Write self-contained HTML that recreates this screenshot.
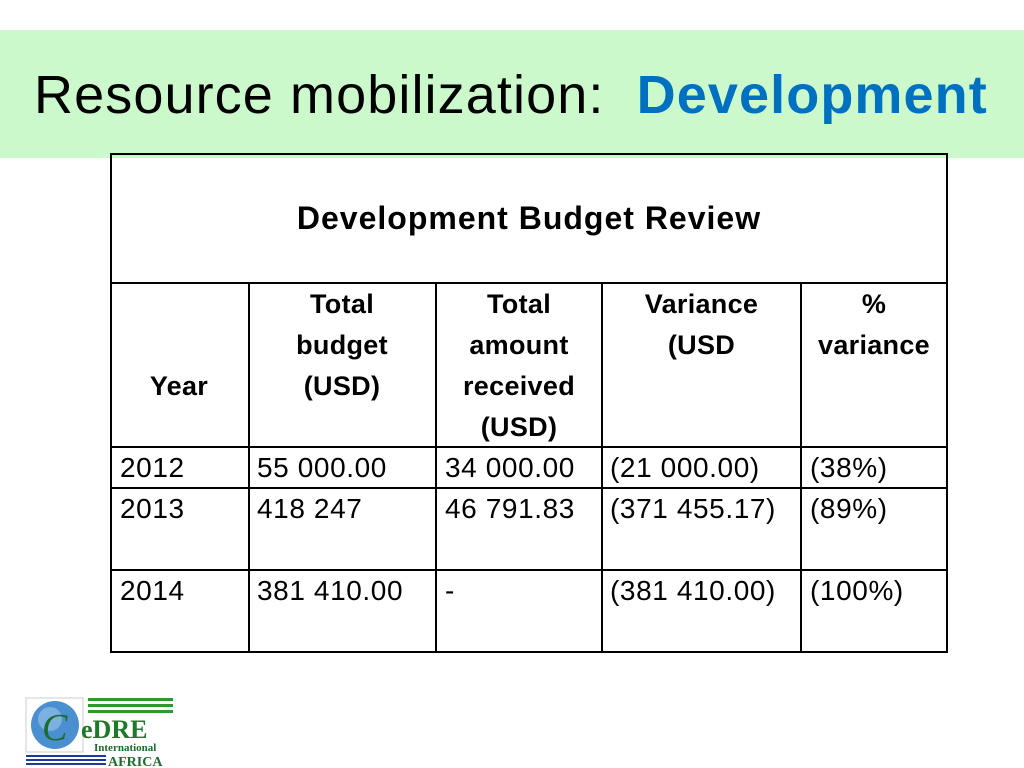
<!DOCTYPE html>
<html><head><style>
body{margin:0;width:1024px;height:768px;background:#fff;position:relative;overflow:hidden;font-family:"Liberation Sans",sans-serif}
.band{position:absolute;left:0;top:30px;width:1024px;height:128px;background:#ccf9cc}
.title{position:absolute;left:34px;top:62px;font-size:54px;line-height:66px;color:#000;white-space:nowrap;letter-spacing:1.1px}
.title b{color:#0070c0}
.l{position:absolute;background:#000}
.t{position:absolute;font-size:28px;color:#000;white-space:nowrap;line-height:41px;letter-spacing:0.6px}
.h{font-weight:bold;text-align:center;font-size:27px;letter-spacing:0.3px}
</style></head><body>
<div class="band"></div>
<div class="title">Resource mobilization:&nbsp; <b>Development</b></div>
<div class="l" style="left:110px;top:153px;width:838px;height:2px"></div>
<div class="l" style="left:110px;top:282px;width:838px;height:2px"></div>
<div class="l" style="left:110px;top:446px;width:838px;height:2px"></div>
<div class="l" style="left:110px;top:487px;width:838px;height:2px"></div>
<div class="l" style="left:110px;top:569px;width:838px;height:2px"></div>
<div class="l" style="left:110px;top:651px;width:838px;height:2px"></div>
<div class="l" style="left:110px;top:153px;width:2px;height:500px"></div>
<div class="l" style="left:946px;top:153px;width:2px;height:500px"></div>
<div class="l" style="left:248px;top:282px;width:2px;height:371px"></div>
<div class="l" style="left:435px;top:282px;width:2px;height:371px"></div>
<div class="l" style="left:601px;top:282px;width:2px;height:371px"></div>
<div class="l" style="left:800px;top:282px;width:2px;height:371px"></div>
<div class="t h" style="left:110px;width:838px;top:198px;font-size:32px;letter-spacing:1px">Development Budget Review</div>
<div class="t h" style="left:110px;width:138px;top:366px">Year</div>
<div class="t h" style="left:248px;width:188px;top:284px">Total<br>budget<br>(USD)</div>
<div class="t h" style="left:436px;width:166px;top:284px">Total<br>amount<br>received<br>(USD)</div>
<div class="t h" style="left:602px;width:199px;top:284px">Variance<br>(USD</div>
<div class="t h" style="left:801px;width:146px;top:284px">%<br>variance</div>
<div class="t" style="left:120px;top:447px">2012</div>
<div class="t" style="left:257px;top:447px">55 000.00</div>
<div class="t" style="left:445px;top:447px">34 000.00</div>
<div class="t" style="left:610px;top:447px">(21 000.00)</div>
<div class="t" style="left:810px;top:447px">(38%)</div>
<div class="t" style="left:120px;top:488px">2013</div>
<div class="t" style="left:257px;top:488px">418 247</div>
<div class="t" style="left:445px;top:488px">46 791.83</div>
<div class="t" style="left:610px;top:488px">(371 455.17)</div>
<div class="t" style="left:810px;top:488px">(89%)</div>
<div class="t" style="left:120px;top:570px">2014</div>
<div class="t" style="left:257px;top:570px">381 410.00</div>
<div class="t" style="left:445px;top:570px">-</div>
<div class="t" style="left:610px;top:570px">(381 410.00)</div>
<div class="t" style="left:810px;top:570px">(100%)</div>
<svg style="position:absolute;left:24px;top:696px" width="152" height="72">
<rect x="2" y="2" width="57" height="54" fill="#fff" stroke="#ccc"/>
<circle cx="31" cy="29" r="24" fill="#4a8fd0"/>
<circle cx="26" cy="23" r="12" fill="#9cc8ee" opacity=".6"/>
<text x="18" y="44" font-family="Liberation Serif" font-style="italic" font-size="38" fill="#1e6b2c">C</text>
<rect x="64" y="2" width="85" height="3" fill="#2e9a2e"/>
<rect x="64" y="8" width="85" height="3" fill="#2e9a2e"/>
<rect x="64" y="14" width="85" height="3" fill="#2e9a2e"/>
<text x="57" y="42" font-family="Liberation Serif" font-weight="bold" font-size="26" fill="#1e7a28">eDRE</text>
<text x="70" y="55" font-family="Liberation Serif" font-weight="bold" font-size="11" fill="#1e6b2c">International</text>
<rect x="2" y="59" width="80" height="2" fill="#1a3aa0"/>
<rect x="2" y="63" width="80" height="2" fill="#1a3aa0"/>
<rect x="2" y="67" width="80" height="2" fill="#1a3aa0"/>
<text x="84" y="70" font-family="Liberation Serif" font-weight="bold" font-size="14" fill="#1e6b2c">AFRICA</text>
</svg>
</body></html>
